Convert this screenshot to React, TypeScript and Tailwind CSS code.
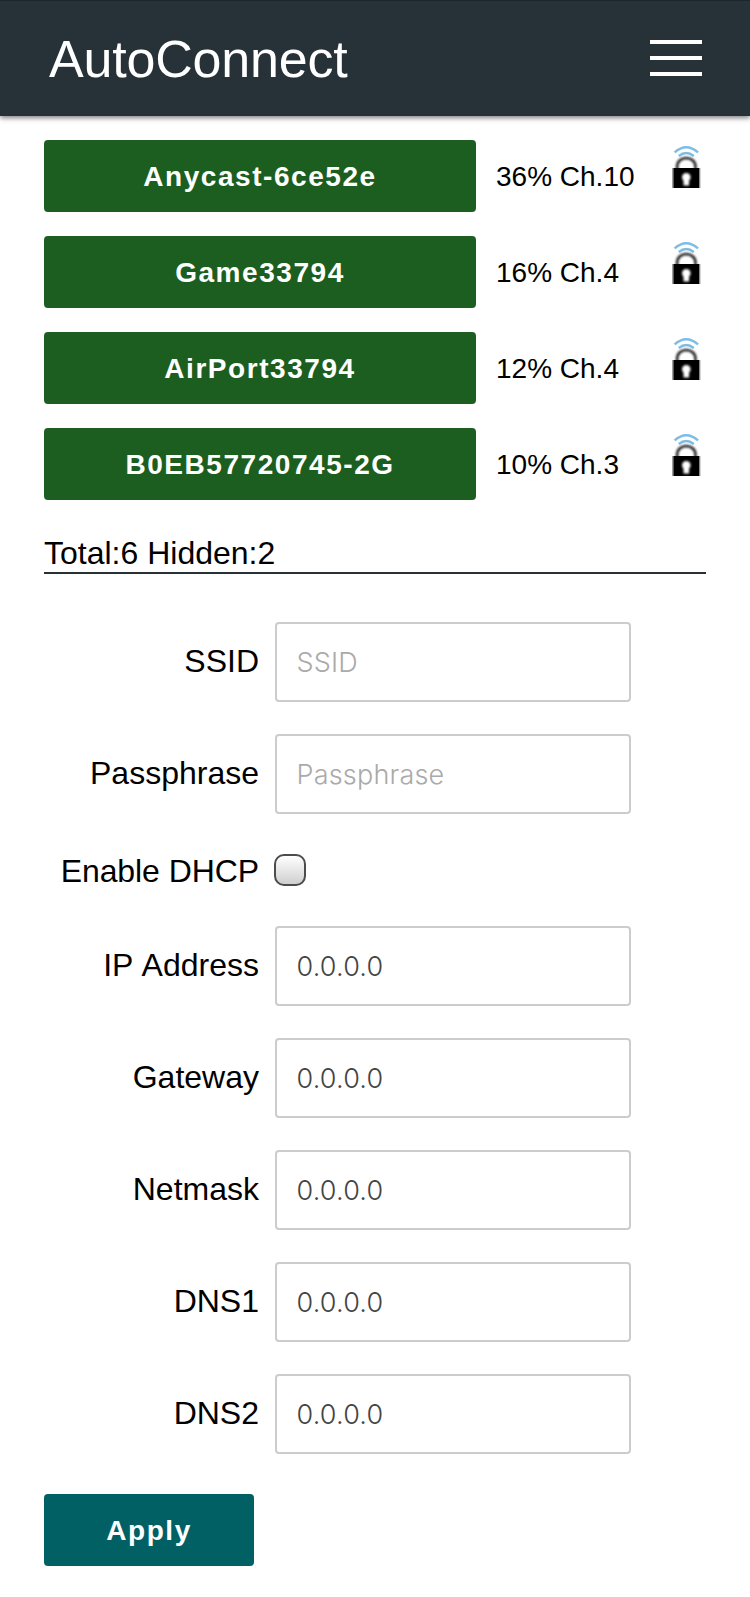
import React from "react";

const networks = [
  { ssid: "Anycast-6ce52e", info: "36% Ch.10" },
  { ssid: "Game33794", info: "16% Ch.4" },
  { ssid: "AirPort33794", info: "12% Ch.4" },
  { ssid: "B0EB57720745-2G", info: "10% Ch.3" },
];

const addresses = ["IP Address", "Gateway", "Netmask", "DNS1", "DNS2"];

function LockIcon() {
  return (
    <svg width="30" height="46" viewBox="0 0 30 46" fill="none" aria-hidden="true">
      <defs>
        <filter id="soft" x="-20%" y="-20%" width="140%" height="140%">
          <feGaussianBlur stdDeviation="0.8" />
        </filter>
      </defs>
      <path d="M3.6 8.4Q15.3 -2 27 8.4" stroke="#7dbce6" strokeWidth="2.4" />
      <path d="M7.8 12Q15.3 6 22.8 12" stroke="#7dbce6" strokeWidth="2.3" />
      <g filter="url(#soft)">
        <path d="M6.1 26V23C6.1 11 24.5 11 24.5 23V26" stroke="#1c1c1c" strokeWidth="2.5" />
      </g>
      <path d="M2.3 24H28.3V44H2.3Z" fill="#000" />
      <path d="M1.8 24V44M28.8 24V44" stroke="#777" strokeWidth="1" />
      <g filter="url(#soft)" fill="#fff">
        <circle cx="15.3" cy="33.2" r="4.3" />
        <path d="M12.5 33H18.1V41.5H12.5Z" />
      </g>
    </svg>
  );
}

function Field({ label, value, placeholder }: { label: string; value?: string; placeholder?: string }) {
  return (
    <div className="flex h-20 items-center">
      <label className="w-[215px] shrink-0 pb-0.5 text-right text-[32px] leading-[38px] [word-spacing:1.6px]">{label}</label>
      <input
        defaultValue={value}
        placeholder={placeholder}
        className="ml-4 h-20 w-[356px] rounded-[4px] border-2 border-[#cccccc] bg-white pr-5 pl-[19.5px] font-['Inter','Liberation_Sans',sans-serif] text-[27px] font-light tracking-[0.2px] text-[#444444] outline-none placeholder:tracking-[0.2px] placeholder:text-[#aaaaaa]"
      />
    </div>
  );
}

export default function App() {
  return (
    <div className="h-[1597px] w-[750px] overflow-hidden bg-white font-['Liberation_Sans',Arial,sans-serif] text-black">
      <header className="flex h-[116px] items-center justify-between border-t border-[#1b262c] bg-[#263238] pr-12 pb-px pl-12 shadow-[0_2px_5px_rgba(0,0,0,0.5)]">
        <h1 className="pt-0.5 pl-px text-[52px] leading-[60px] tracking-[-0.2px] text-white">AutoConnect</h1>
        <button aria-label="Menu" className="flex flex-col gap-3">
          <span className="h-1 w-[52px] bg-white" />
          <span className="h-1 w-[52px] bg-white" />
          <span className="h-1 w-[52px] bg-white" />
        </button>
      </header>
      <main className="px-11 pt-6">
        <div className="flex flex-col gap-6">
          {networks.map((n) => (
            <div key={n.ssid} className="flex h-[72px]">
              <button className="h-[72px] w-[432px] rounded-[4px] bg-[#1b5e20] pt-0.5 text-[28px] font-bold tracking-[1.55px] text-white">
                {n.ssid}
              </button>
              <span className="ml-5 w-[175px] pt-px text-[28px] leading-[72px]">{n.info}</span>
              <span className="pt-1">
                <LockIcon />
              </span>
            </div>
          ))}
        </div>
        <div className="mt-9 h-[38px] border-b-2 border-[#263238] text-[32px] leading-[34px]">
          Total:6 Hidden:2
        </div>
        <form className="pt-12" onSubmit={(e) => e.preventDefault()}>
          <div className="flex flex-col gap-8">
            <Field label="SSID" placeholder="SSID" />
            <Field label="Passphrase" placeholder="Passphrase" />
          </div>
          <div className="flex h-28 items-center">
            <label className="w-[215px] shrink-0 pt-0.5 text-right text-[32px] leading-[38px] tracking-[-0.08px] whitespace-nowrap">Enable DHCP</label>
            <input
              type="checkbox"
              className="ml-[15px] size-8 appearance-none rounded-[10px] border-2 border-[#4c4c4c] bg-linear-to-b from-white to-[#cfcfcf]"
            />
          </div>
          <div className="flex flex-col gap-8">
            {addresses.map((a) => (
              <Field key={a} label={a} value="0.0.0.0" />
            ))}
          </div>
          <button className="mt-10 h-[72px] w-[210px] rounded-[4px] bg-[#006064] pt-0.5 text-[28px] font-bold tracking-[1.55px] text-white">
            Apply
          </button>
        </form>
      </main>
    </div>
  );
}
